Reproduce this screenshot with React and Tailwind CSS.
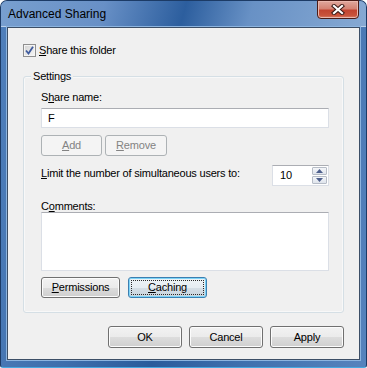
import React from "react";

const font = { fontFamily: '"Liberation Sans", Arial, sans-serif' };

function Mn({ children }) {
  return <span className="underline decoration-1 underline-offset-[1px]">{children}</span>;
}

function WinButton({ children, className = "", disabled = false, focused = false }) {
  if (disabled) {
    return (
      <button className={`flex h-[21px] items-center justify-center rounded-[3px] border border-[#adb2b5] bg-[#f4f4f4] text-[11px] tracking-[-0.2px] text-[#838383] ${className}`}>
        {children}
      </button>
    );
  }
  if (focused) {
    return (
      <button className={`flex h-[21px] items-center justify-center rounded-[3px] border border-[#3c7fb1] bg-[linear-gradient(#eef3f6_0%,#e6edf2_50%,#d6dfe6_50%,#c9d4dd_100%)] p-[2px] text-[11px] tracking-[-0.2px] text-black shadow-[inset_0_0_0_1px_#7fd5f8] ${className}`}>
        <span className="flex h-full w-full items-center justify-center border border-dotted border-[#2a2a2a]">{children}</span>
      </button>
    );
  }
  return (
    <button className={`flex h-[21px] items-center justify-center rounded-[3px] border border-[#707070] bg-[linear-gradient(#f2f2f2_0%,#ebebeb_50%,#dddddd_50%,#cfcfcf_100%)] text-[11px] tracking-[-0.2px] text-black shadow-[inset_0_0_0_1px_#fcfcfc] ${className}`}>
      {children}
    </button>
  );
}

function SpinArrow({ up }) {
  return (
    <div className="flex h-[8px] w-[15px] items-center justify-center rounded-[1px] border border-[#b6bcc6] bg-[linear-gradient(#f4f6f9,#dfe4ec)]">
      <svg width="7" height="4" viewBox="0 0 7 4">
        {up ? <path d="M0 4 L3.5 0 L7 4 Z" fill="#4d5f8c" /> : <path d="M0 0 L3.5 4 L7 0 Z" fill="#4d5f8c" />}
      </svg>
    </div>
  );
}

export default function App() {
  return (
    <div className="h-[368px] w-[367px] bg-white" style={font}>
      <div className="flex h-[368px] w-[367px] flex-col rounded-t-[7px] rounded-b-[3px] border border-[#1c3b66] border-b-[#46a9e0] bg-[linear-gradient(100deg,#4f7fbb_0%,#3d6eac_30%,#2a5b9b_50%,#3e6fad_70%,#5683bd_100%)]">
        {/* title bar */}
        <div className="flex h-[26px] items-start justify-between rounded-t-[6px] bg-[linear-gradient(105deg,#789fcf_0%,#6890c6_28%,#2c5e9e_50%,#6891c5_68%,#86a9d3_100%)] shadow-[inset_0_-1px_0_#b9d0ea]">
          <span className="pl-[7px] pt-[6px] text-[12px] leading-[14px] text-black">Advanced Sharing</span>
          <div className="-mt-px mr-[7px] flex h-[19px] w-[42px] items-center justify-center rounded-b-[4px] border border-[#4b1c17] bg-[linear-gradient(#e0a89e_0%,#d48374_45%,#c24430_55%,#c9533b_85%,#d9826c_100%)] shadow-[inset_0_0_0_1px_#eab7ad]">
            <svg width="14" height="11" viewBox="0 0 14 11">
              <path d="M3 2 L11 9 M11 2 L3 9" stroke="#3a1a16" strokeWidth="4.2" strokeLinecap="square" />
              <path d="M3 2 L11 9 M11 2 L3 9" stroke="#ffffff" strokeWidth="2.2" strokeLinecap="square" />
            </svg>
          </div>
        </div>

        {/* client area */}
        <div className="mx-[6px] mb-[7px] flex flex-1 flex-col border border-[#3c4e66] bg-[#f0f0f0] text-[11px] leading-[13px] tracking-[-0.2px] text-black shadow-[0_0_0_1px_#8cb4df]">
          <div className="ml-[15px] mt-[16px] flex items-center">
            <div className="flex h-[13px] w-[13px] items-center justify-center border border-[#8f8f8f] bg-[linear-gradient(135deg,#d3d3d3,#f7f7f7)] shadow-[inset_0_0_0_1px_#f4f4f4]">
              <svg width="9" height="9" viewBox="0 0 9 9">
                <path d="M1 4.5 L3.5 7.5 L8 0.8" fill="none" stroke="#3f5b9e" strokeWidth="1.8" />
              </svg>
            </div>
            <span className="ml-[3px]"><Mn>S</Mn>hare this folder</span>
          </div>

          {/* Settings group */}
          <div className="relative ml-[15px] mt-[19px] flex h-[237px] w-[321px] flex-col rounded-[3px] border border-[#d5dfe5] pl-[17px] shadow-[inset_0_0_0_1px_#ffffff80]">
            <span className="absolute -top-[7px] left-[7px] bg-[#f0f0f0] px-[2px]">Settings</span>

            <span className="mt-[14px]">S<Mn>h</Mn>are name:</span>
            <div className="mt-[4px] flex h-[20px] w-[288px] items-center border border-[#dbdfe6] border-t-[#abadb3] bg-white pl-[6px]">F</div>

            <div className="mt-[7px] flex gap-[3px]">
              <WinButton disabled className="w-[61px]"><Mn>A</Mn>dd</WinButton>
              <WinButton disabled className="w-[62px]"><Mn>R</Mn>emove</WinButton>
            </div>

            <div className="mt-[9px] flex w-[288px] items-start justify-between">
              <span className="pt-[2px]"><Mn>L</Mn>imit the number of simultaneous users to:</span>
              <div className="flex h-[21px] w-[57px] items-center justify-between border border-[#dbdfe6] border-t-[#abadb3] bg-white pl-[7px] pr-[1px]">
                <span>10</span>
                <div className="flex flex-col gap-[1px]">
                  <SpinArrow up />
                  <SpinArrow />
                </div>
              </div>
            </div>

            <span className="mt-[14px]">C<Mn>o</Mn>mments:</span>
            <div className="mt-[-1px] h-[59px] w-[288px] border border-[#dbdfe6] border-t-[#abadb3] bg-white" />

            <div className="mt-[6px] flex gap-[8px]">
              <WinButton className="w-[79px]"><Mn>P</Mn>ermissions</WinButton>
              <WinButton focused className="w-[79px]"><Mn>C</Mn>aching</WinButton>
            </div>
          </div>

          <div className="mr-[15px] mt-[13px] flex justify-end gap-[7px]">
            <WinButton className="!h-[22px] w-[74px]">OK</WinButton>
            <WinButton className="!h-[22px] w-[74px]">Cancel</WinButton>
            <WinButton className="!h-[22px] w-[74px]">Apply</WinButton>
          </div>
        </div>
      </div>
    </div>
  );
}
